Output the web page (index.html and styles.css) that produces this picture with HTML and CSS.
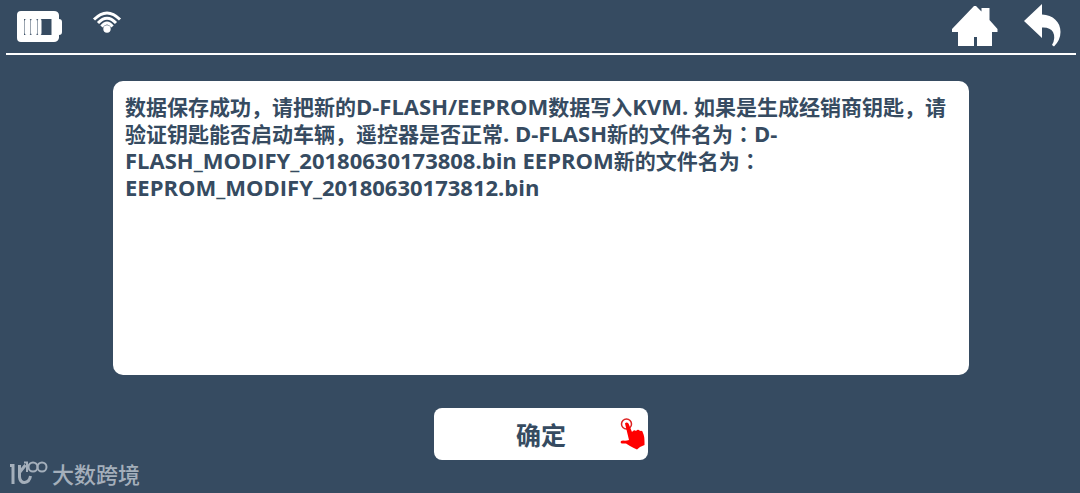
FILE: index.html
```html
<!DOCTYPE html>
<html lang="zh-CN">
<head>
<meta charset="utf-8">
<meta name="viewport" content="width=device-width, initial-scale=1">
<title>数据保存成功</title>
<link rel="stylesheet" href="styles.css">
</head>
<body>
<div class="screen">
  <header class="topbar">
    <div class="status">
      <svg class="battery" viewBox="0 0 46 34" role="img" aria-label="电量">
        <path class="solid" fill-rule="evenodd" d="M5 2H38Q42.500 2 43 6V10Q46 10 46 13V23Q46 26 43 26V29Q42 33 38 33H5Q1 33 1 29V6Q1 2 5 2ZM8 10V26H35.500V10Z"/>
        <path class="solid" d="M10.500 10h3q1 0 1 2v12q0 2-1 2h-3q-2 0-2-2v-12q0-2 2-2zM16 10h4q1 0 1 2v12q0 2-1 2h-4q-1 0-1-2v-12q0-2 1-2zM22.500 10h2q1 0 1 2v12q0 2-1 2h-2q-1 0-1-2v-12q0-2 1-2z"/>
      </svg>
      <svg class="wifi" viewBox="0 0 30 22" role="img" aria-label="无线网络">
        <path class="arc" d="M2 8.500Q15-4.500 28 8.500M6 12Q15 2.500 24 12M9.500 15.500Q15 8.500 20.500 15.500"/>
        <circle class="solid" cx="15" cy="18" r="3.700"/>
      </svg>
    </div>
    <nav class="actions" aria-label="导航">
      <button class="icon-button" type="button" aria-label="主页">
        <svg class="home" viewBox="0 0 46 42" aria-hidden="true">
          <path class="solid" d="M22 1H24L29.500 6.500V3H37.500V15L45.500 24V27H40V41H25V32H22V41H6V27H0V24Z"/>
        </svg>
      </button>
      <button class="icon-button" type="button" aria-label="返回">
        <svg class="back" viewBox="0 0 40 44" aria-hidden="true">
          <path class="solid" d="M19 0V10.500C30 11 37.500 18 37.500 28Q37.500 36 31 42.500L29 41Q33 34 30 28Q27 23 19 23.500V34L1 17Z"/>
        </svg>
      </button>
    </nav>
  </header>
  <main class="content">
    <section class="message">
      <p class="message-text">数据保存成功，请把新的<span class="latin">D-FLASH/EEPROM</span>数据写入<span class="latin">KVM. </span>如果是生成经销商钥匙，请验证钥匙能否启动车辆，遥控器是否正常<span class="latin">. D-FLASH</span>新的文件名为<span class="colon" lang="zh-TW">：</span><span class="latin">D-FLASH_MODIFY_20180630173808.bin EEPROM</span>新的文件名为<span class="colon" lang="zh-TW">：</span><span class="latin">EEPROM_MODIFY_20180630173812.bin</span></p>
    </section>
    <button class="confirm" type="button">确定
      <svg class="hand" viewBox="0 0 26 32" aria-hidden="true">
        <circle class="ring" cx="6.500" cy="6" r="5"/>
        <path class="red" d="M5 5.500Q6.500 3.500 8.500 5.500L12 14Q14 11 16 13Q18 10.500 20 13Q22.500 12 23 15Q24.500 18 24.500 24V27L20 29L17 31.500Q14 30 10 28L6 25.500H2Q0 25 1 23L3 22.500Q6 23 9 22Z"/>
      </svg>
    </button>
  </main>
  <div class="watermark">
    <svg class="watermark-logo" viewBox="0 0 40 28" aria-hidden="true">
      <path class="mark-thick" d="M1 5.500H4V24M16.500 5L10.500 12.500V17Q11 22.500 15.500 22.500Q20.500 22 21.500 16M10.500 5V13"/>
      <path class="mark-thin" d="M15 2.500H18V12"/>
      <circle class="mark-thin" cx="24" cy="7" r="4.500"/>
      <circle class="mark-thin" cx="33" cy="7" r="4.500"/>
    </svg>
    <span>大数跨境</span>
  </div>
</div>
</body>
</html>
```

FILE: styles.css
```css
* {
  box-sizing: border-box;
}

body {
  margin: 0;
  background: #364b61;
  color: #364b61;
  font-family: "Open Sans", "Noto Sans CJK SC", sans-serif;
}

button {
  padding: 0;
  border: 0;
  color: inherit;
  font: inherit;
  cursor: pointer;
}

svg {
  display: block;
}

.screen {
  position: relative;
  min-height: 100vh;
  padding: 0 4px 0 6px;
}

.topbar {
  display: flex;
  justify-content: space-between;
  height: 55px;
  padding: 4px 13px 0 10px;
  border-bottom: 2px solid #fff;
}

.status {
  display: flex;
  gap: 30px;
  padding-top: 5px;
}

.actions {
  display: flex;
  gap: 25px;
}

.icon-button {
  display: flex;
  align-items: flex-start;
  background: transparent;
}

.battery {
  width: 46px;
  height: 34px;
}

.wifi {
  width: 30px;
  height: 22px;
  margin-top: 2px;
}

.home {
  width: 46px;
  height: 42px;
  margin-top: 1px;
}

.back {
  width: 40px;
  height: 44px;
}

.solid {
  fill: #fff;
}

.arc {
  fill: none;
  stroke: #fff;
  stroke-width: 3;
}

.content {
  display: flex;
  flex-direction: column;
  align-items: center;
  gap: 33px;
  padding-top: 26px;
}

.message {
  width: 80%;
  min-height: 294px;
  padding: 12px;
  border-radius: 10px;
  background: #fff;
}

.message-text {
  margin: 0;
  font-family: "Noto Sans CJK SC", sans-serif;
  font-size: 21px;
  font-weight: 700;
  line-height: 27px;
}

.latin {
  font-family: "Open Sans", sans-serif;
  font-size: 22px;
  line-height: 1;
}

.colon {
  font-family: "Noto Sans CJK TC", sans-serif;
}

.confirm {
  position: relative;
  width: 20%;
  min-width: 160px;
  height: 52px;
  border-radius: 8px;
  background: #fff;
  font-size: 25px;
  font-weight: 700;
}

.hand {
  position: absolute;
  top: 10px;
  right: 2px;
  width: 26px;
  height: 32px;
}

.red {
  fill: #f00;
}

.ring {
  fill: none;
  stroke: #d22;
  stroke-width: 1.5;
}

.watermark {
  position: absolute;
  bottom: 4px;
  left: 9px;
  display: flex;
  align-items: center;
  gap: 3px;
  color: #a4afbb;
  font-size: 22px;
  font-weight: 500;
  line-height: 30px;
}

.watermark-logo {
  width: 40px;
  height: 28px;
}

.mark-thick {
  fill: none;
  stroke: #a4afbb;
  stroke-width: 3;
}

.mark-thin {
  fill: none;
  stroke: #a4afbb;
  stroke-width: 2;
}
```
